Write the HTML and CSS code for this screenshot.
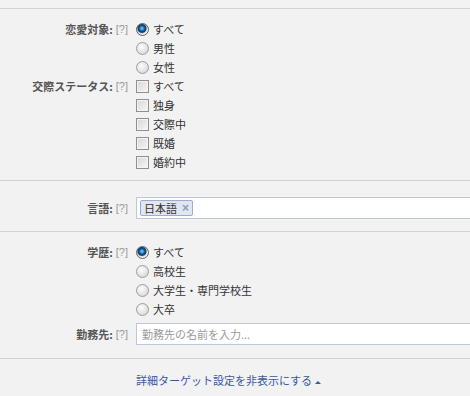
FILE: index.html
```html
<!DOCTYPE html>
<html lang="ja">
  <head>
    <meta charset="utf-8" />
    <meta name="viewport" content="width=device-width, initial-scale=1.0" />
    <title>ターゲット設定</title>
    <link rel="stylesheet" href="styles.css">
  </head>

  <body>
    <section class="group first">
      <div class="field">
        <div class="label"><b>恋愛対象:</b><span class="help">[?]</span></div>
        <div class="options">
          <label class="opt"><input type="radio" name="interest" checked />すべて</label>
          <label class="opt"><input type="radio" name="interest" />男性</label>
          <label class="opt"><input type="radio" name="interest" />女性</label>
        </div>
      </div>
      <div class="field">
        <div class="label"><b>交際ステータス:</b><span class="help">[?]</span></div>
        <div class="options">
          <label class="opt"><input type="checkbox" />すべて</label>
          <label class="opt"><input type="checkbox" />独身</label>
          <label class="opt"><input type="checkbox" />交際中</label>
          <label class="opt"><input type="checkbox" />既婚</label>
          <label class="opt"><input type="checkbox" />婚約中</label>
        </div>
      </div>
    </section>

    <section class="group lang">
      <div class="field">
        <div class="label boxed"><b>言語:</b><span class="help">[?]</span></div>
        <div class="textbox">
          <span class="token">日本語<span class="remove">×</span></span>
        </div>
      </div>
    </section>

    <section class="group edu">
      <div class="field">
        <div class="label"><b>学歴:</b><span class="help">[?]</span></div>
        <div class="options">
          <label class="opt"><input type="radio" name="edu" checked />すべて</label>
          <label class="opt"><input type="radio" name="edu" />高校生</label>
          <label class="opt"><input type="radio" name="edu" />大学生・専門学校生</label>
          <label class="opt"><input type="radio" name="edu" />大卒</label>
        </div>
      </div>
      <div class="field work">
        <div class="label boxed"><b>勤務先:</b><span class="help">[?]</span></div>
        <input class="textbox" type="text" placeholder="勤務先の名前を入力..." />
      </div>
    </section>

    <section class="group footer">
      <a href="#" class="toggle">詳細ターゲット設定を非表示にする<span class="arrow"></span></a>
    </section>
  </body>
</html>
```

FILE: styles.css
```css
html,
body {
  margin: 0;
  background-color: #f2f2f2;
}

body {
  padding-top: 8px;
  font-family: "Noto Sans CJK JP", "Noto Sans", sans-serif;
  font-size: 11px;
  color: #333;
}

.group {
  border-top: 1px solid #d2d2d2;
}

.first {
  padding: 11px 0 8px;
}

.lang {
  padding: 16px 0 11px;
}

.edu {
  padding: 11px 0 12px;
}

.footer {
  padding: 12px 0 0 136px;
  height: 27px;
}

.field {
  display: grid;
  grid-template-columns: 128px 1fr;
  column-gap: 8px;
}

.label {
  text-align: right;
  line-height: 19px;
  color: #555;
}

.label.boxed {
  line-height: 22px;
}

.help {
  font-family: "Liberation Sans", sans-serif;
  font-size: 11px;
  color: #9a9a9a;
  margin-left: 3px;
  position: relative;
  top: -1px;
}

.options {
  display: flex;
  flex-direction: column;
}

.opt {
  display: flex;
  align-items: center;
  gap: 4px;
  height: 19px;
  line-height: 19px;
}

.opt input {
  appearance: none;
  margin: 0;
  width: 13px;
  height: 13px;
  flex: none;
}

.opt input[type="radio"] {
  border-radius: 50%;
  border: 1px solid #9c9c9c;
  background: radial-gradient(circle at 40% 35%, #fdfdfd, #e2e2e2 60%, #cfcfcf);
}

.opt input[type="radio"]:checked {
  border-color: #5f5f5f;
  background: radial-gradient(circle at 45% 40%, #8fd4f7 0, #1b7fc4 2px, #0b4f86 3px, #163a5c 4px, #d6d6d6 5px, #f2f2f2 6px);
}

.opt input[type="checkbox"] {
  border: 1px solid #8e8f8f;
  box-shadow: inset 0 0 0 1px #f4f4f4;
  background: linear-gradient(135deg, #d6d6d6, #f7f7f7);
}

.work {
  margin-top: 4px;
}

.textbox {
  box-sizing: border-box;
  height: 22px;
  width: 100%;
  margin: 0;
  padding: 2px 3px;
  border: 1px solid #bdc7d8;
  border-right: none;
  background-color: white;
  font-family: inherit;
  font-size: 11px;
  color: #333;
}

input.textbox {
  padding: 0 5px;
  outline: none;
}

input.textbox::placeholder {
  color: #9a9a9a;
}

.token {
  display: inline-flex;
  align-items: center;
  height: 14px;
  padding: 0 3px;
  border: 1px solid #9daccc;
  border-radius: 2px;
  background-color: #e2e6f0;
  line-height: 14px;
}

.remove {
  font-family: "Liberation Sans", sans-serif;
  font-weight: bold;
  font-size: 12px;
  color: #8d9bb8;
  margin-left: 5px;
}

.toggle {
  color: #3b5998;
  text-decoration: none;
  line-height: 19px;
}

.arrow {
  display: inline-block;
  margin-left: 3px;
  vertical-align: middle;
  border-left: 3px solid transparent;
  border-right: 3px solid transparent;
  border-bottom: 3px solid #3b5998;
}
```
